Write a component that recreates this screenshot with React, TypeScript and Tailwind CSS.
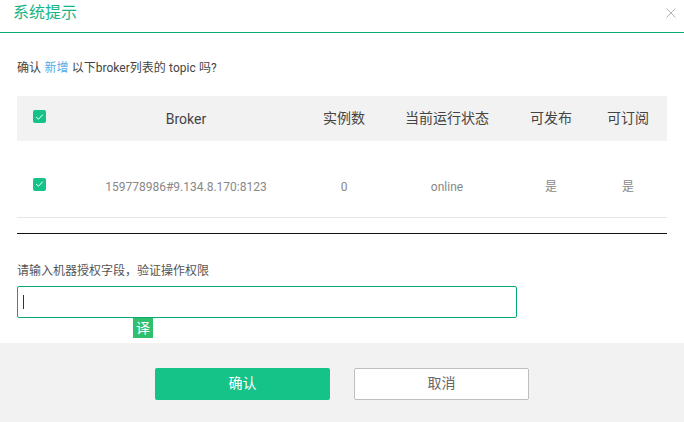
import React from "react";

const font = 'Roboto,"Noto Sans CJK SC",sans-serif';

function Check() {
  return (
    <span className="flex h-[13px] w-[13px] items-center justify-center rounded-[2px] bg-[#15c288]">
      <svg width="9" height="8" viewBox="0 0 9 8" fill="none">
        <path d="M1.2 4.2 L3.5 6.2 L7.8 1.6" stroke="#fff" strokeWidth="1" />
      </svg>
    </span>
  );
}

const cols = "grid grid-cols-[48px_242px_74px_132px_76px_78px]";

export default function App() {
  return (
    <div
      className="flex h-[422px] w-[684px] flex-col overflow-hidden bg-white"
      style={{ fontFamily: font }}
    >
      <header className="flex h-[33px] shrink-0 items-center justify-between border-b border-[#0aa974] pl-[13px] pr-[8px] pb-[7px]">
        <span className="text-[16px] leading-[24px] text-[#16b583]">系统提示</span>
        <svg width="10" height="10" viewBox="0 0 10 10" fill="none" className="mt-[1px]">
          <path d="M0.5 0.5 L9.5 9.5 M9.5 0.5 L0.5 9.5" stroke="#b4b4b4" strokeWidth="1" />
        </svg>
      </header>

      <main className="relative flex flex-1 flex-col px-[17px]">
        <p className="mt-[26px] h-[18px] text-[12px] leading-[18px] text-[#444] [word-spacing:0.4px]">
          确认 <span className="text-[#5aa9e6]">新增</span> 以下broker列表的 topic 吗?
        </p>

        <div className={`${cols} mt-[19px] h-[45px] w-[650px] items-center bg-[#f2f2f2] text-center text-[14px] text-[#444]`}>
          <div className="flex -translate-y-[2px] justify-start pl-[16px]"><Check /></div>
          <div className="pt-[2px]">Broker</div>
          <div>实例数</div>
          <div>当前运行状态</div>
          <div>可发布</div>
          <div>可订阅</div>
        </div>

        <div className={`${cols} h-[77px] w-[650px] items-center border-b border-[#e6e6e6] pt-[16px] text-center text-[12px] text-[#888]`}>
          <div className="flex -translate-y-[3px] justify-start pl-[16px]"><Check /></div>
          <div>159778986#9.134.8.170:8123</div>
          <div>0</div>
          <div>online</div>
          <div>是</div>
          <div>是</div>
        </div>

        <div className="mt-[15px] h-px w-[650px] bg-[#111]" />

        <label className="mt-[28px] h-[18px] text-[12px] leading-[18px] text-[#555]">
          请输入机器授权字段，验证操作权限
        </label>

        <div className="mt-[6px] flex h-[32px] w-[500px] items-center rounded-[2px] border border-[#0aa974] pl-[5px]">
          <span className="h-[14px] w-px bg-[#333]" />
        </div>

        <span className="absolute left-[133px] top-[285px] flex h-[20px] w-[20px] items-center justify-center bg-[#2fc06f] text-[14px] leading-none text-white">
          译
        </span>
      </main>

      <footer className="flex h-[79px] shrink-0 items-start justify-center gap-[24px] bg-[#f2f2f2] pt-[25px]">
        <button className="h-[32px] w-[175px] rounded-[2px] bg-[#15c288] pb-[2px] text-[14px] text-white">确认</button>
        <button className="h-[32px] w-[175px] rounded-[2px] border border-[#bfbfbf] bg-white pb-[2px] text-[14px] text-[#666]">取消</button>
      </footer>
    </div>
  );
}
